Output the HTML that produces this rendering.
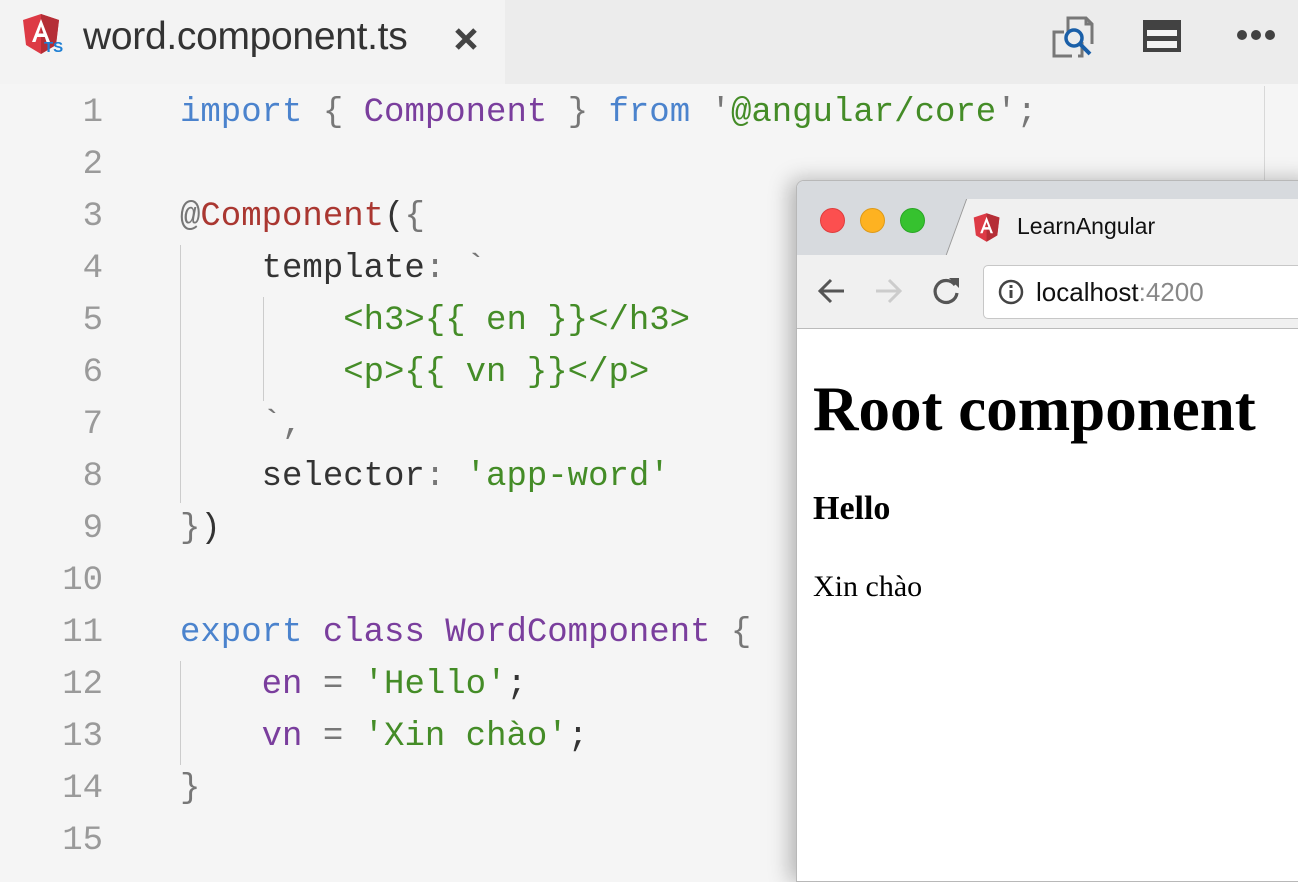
<!DOCTYPE html>
<html><head><meta charset="utf-8"><style>
body{margin:0;width:1298px;height:842px;overflow:hidden;background:#f5f5f5;position:relative;font-family:"Liberation Sans",sans-serif}
.tabbar{position:absolute;left:0;top:0;width:1298px;height:84px;background:#ececec}
.tab{position:absolute;left:0;top:0;width:505px;height:84px;background:#f3f3f3}
.tabt{position:absolute;left:83px;top:15px;font-size:39px;color:#333;letter-spacing:-0.3px}
.code{position:absolute;left:0;top:87px;font-family:"Liberation Mono",monospace;font-size:34px}
.ln{position:absolute;left:0;width:103px;text-align:right;color:#9a9a9a;line-height:52px}
.l{position:absolute;left:180px;white-space:pre;line-height:52px;color:#333}
.k{color:#4b83cd}.p{color:#7a3e9d}.s{color:#448c27}.g{color:#777}.r{color:#aa3731}
.guide{position:absolute;width:1px;background:#ccc}
.win{position:absolute;left:796px;top:180px;width:520px;height:700px;background:#fff;border-radius:8px 0 0 0;box-shadow:-6px 0 22px rgba(0,0,0,.28);overflow:hidden;border:1px solid #b8b8b8}
.title{position:absolute;left:0;top:0;width:100%;height:74px;background:#d7dade}
.dot{position:absolute;top:27px;width:23px;height:23px;border-radius:50%}
.btab{position:absolute;left:148px;top:18px;width:400px;height:58px;background:#f0f0f0;border-left:1px solid #999;transform:skewX(-20deg);transform-origin:bottom left}
.tool{position:absolute;left:0;top:74px;width:100%;height:73px;background:#f0f0f0;border-bottom:1px solid #bbb}
.url{position:absolute;left:186px;top:10px;width:400px;height:52px;background:#fff;border:1px solid #c7c7c7;border-radius:5px}
</style></head><body>
<div class="tabbar"><div class="tab"></div>
<svg style="position:absolute;left:22px;top:14px" width="42" height="40" viewBox="0 0 42 40"><path d="M19 0 L37 6 L34 31 L19 40 L4 31 L1 6Z" fill="#dd3a45"/><path d="M19 0 L37 6 L34 31 L19 40Z" fill="#b52e36"/><path d="M19 5 L28 28 H24.5 L22.8 23 H15.2 L13.5 28 H10Z M16.5 19.5 H21.5 L19 12.5Z" fill="#fff"/><text x="22" y="38" font-family="Liberation Sans" font-weight="bold" font-size="15" fill="#1e7fd4">TS</text></svg>
<div class="tabt">word.component.ts</div>
<svg style="position:absolute;left:454px;top:27px" width="24" height="24"><path d="M3 3 L21 21 M21 3 L3 21" stroke="#444" stroke-width="5"/></svg>
<svg style="position:absolute;left:1052px;top:16px" width="44" height="42" viewBox="0 0 44 42"><path d="M12 16 H2 V40 H20 M26 40 H30 V26 M16 16 V2 H34 L40 8 V28 M34 2 V8 H40" fill="none" stroke="#777" stroke-width="3"/><circle cx="22" cy="22" r="8" fill="none" stroke="#1a5fa8" stroke-width="3.5"/><path d="M28 28 L38 38" stroke="#1a5fa8" stroke-width="4"/></svg>
<div style="position:absolute;left:1143px;top:20px;width:38px;height:32px;background:#424242"></div>
<div style="position:absolute;left:1147px;top:30px;width:30px;height:6px;background:#f3f3f3"></div>
<div style="position:absolute;left:1147px;top:41px;width:30px;height:7px;background:#f3f3f3"></div>
<svg style="position:absolute;left:1236px;top:28px" width="42" height="14"><circle cx="6" cy="7" r="5" fill="#424242"/><circle cx="20" cy="7" r="5" fill="#424242"/><circle cx="34" cy="7" r="5" fill="#424242"/></svg>
</div>
<div style="position:absolute;left:1264px;top:86px;width:1px;height:100px;background:#d8d8d8"></div>
<div class="code">
<div class="guide" style="left:180px;top:158px;height:258px"></div>
<div class="guide" style="left:263px;top:210px;height:104px"></div>
<div class="guide" style="left:180px;top:574px;height:104px"></div>
<div class="ln" style="top:0">1</div><div class="ln" style="top:52px">2</div><div class="ln" style="top:104px">3</div><div class="ln" style="top:156px">4</div><div class="ln" style="top:208px">5</div><div class="ln" style="top:260px">6</div><div class="ln" style="top:312px">7</div><div class="ln" style="top:364px">8</div><div class="ln" style="top:416px">9</div><div class="ln" style="top:468px">10</div><div class="ln" style="top:520px">11</div><div class="ln" style="top:572px">12</div><div class="ln" style="top:624px">13</div><div class="ln" style="top:676px">14</div><div class="ln" style="top:728px">15</div>
<div class="l" style="top:0"><span class="k">import</span> <span class="g">{</span> <span class="p">Component</span> <span class="g">}</span> <span class="k">from</span> <span class="g">'</span><span class="s">@angular/core</span><span class="g">'</span><span class="g">;</span></div>
<div class="l" style="top:104px"><span class="g">@</span><span class="r">Component</span>(<span class="g">{</span></div>
<div class="l" style="top:156px">    template<span class="g">:</span> <span class="g">`</span></div>
<div class="l s" style="top:208px">        &lt;h3&gt;{{ en }}&lt;/h3&gt;</div>
<div class="l s" style="top:260px">        &lt;p&gt;{{ vn }}&lt;/p&gt;</div>
<div class="l g" style="top:312px">    `,</div>
<div class="l" style="top:364px">    selector<span class="g">:</span> <span class="s">'app-word'</span></div>
<div class="l" style="top:416px"><span class="g">}</span>)</div>
<div class="l" style="top:520px"><span class="k">export</span> <span class="p">class</span> <span class="p">WordComponent</span> <span class="g">{</span></div>
<div class="l" style="top:572px">    <span class="p">en</span> <span class="g">=</span> <span class="s">'Hello'</span>;</div>
<div class="l" style="top:624px">    <span class="p">vn</span> <span class="g">=</span> <span class="s">'Xin chào'</span>;</div>
<div class="l g" style="top:676px">}</div>
</div>
<div class="win">
<div class="title">
<div class="dot" style="left:23px;background:#fc4f4f;border:1px solid #df3d3d"></div>
<div class="dot" style="left:63px;background:#feb221;border:1px solid #de9a18"></div>
<div class="dot" style="left:103px;background:#36c22f;border:1px solid #2aa625"></div>
<div class="btab"></div>
<svg style="position:absolute;left:176px;top:30px" width="30" height="33" viewBox="0 0 42 40"><path d="M19 0 L37 6 L34 31 L19 40 L4 31 L1 6Z" fill="#dd3a45"/><path d="M19 0 L37 6 L34 31 L19 40Z" fill="#b52e36"/><path d="M19 5 L28 28 H24.5 L22.8 23 H15.2 L13.5 28 H10Z M16.5 19.5 H21.5 L19 12.5Z" fill="#fff"/></svg>
<div style="position:absolute;left:220px;top:32px;font-size:23px;color:#111">LearnAngular</div>
</div>
<div class="tool">
<svg style="position:absolute;left:20px;top:22px" width="30" height="28"><path d="M27 14 H4 M14 3 L3 14 L14 25" fill="none" stroke="#555" stroke-width="3"/></svg>
<svg style="position:absolute;left:76px;top:22px" width="30" height="28"><path d="M3 14 H26 M16 3 L27 14 L16 25" fill="none" stroke="#ccc" stroke-width="3"/></svg>
<svg style="position:absolute;left:133px;top:20px" width="32" height="32"><path d="M25 10 A11 11 0 1 0 27 18" fill="none" stroke="#555" stroke-width="3.2"/><path d="M19 3 L29 3 L29 13Z" fill="#555"/></svg>
<div class="url">
<svg style="position:absolute;left:14px;top:13px" width="26" height="26"><circle cx="13" cy="13" r="11" fill="none" stroke="#444" stroke-width="2.5"/><rect x="11.5" y="11" width="3" height="8" fill="#444"/><rect x="11.5" y="6" width="3" height="3" fill="#444"/></svg>
<div style="position:absolute;left:52px;top:11px;font-size:26px;color:#111">localhost<span style="color:#888">:4200</span></div>
</div>
</div>
<div style="position:absolute;left:16px;top:192px;font-family:'Liberation Serif',serif;font-weight:bold;font-size:63px;color:#000">Root component</div>
<div style="position:absolute;left:16px;top:309px;font-family:'Liberation Serif',serif;font-weight:bold;font-size:34px;color:#000">Hello</div>
<div style="position:absolute;left:16px;top:389px;font-family:'Liberation Serif',serif;font-size:30px;color:#000">Xin chào</div>
</div>
</body></html>
